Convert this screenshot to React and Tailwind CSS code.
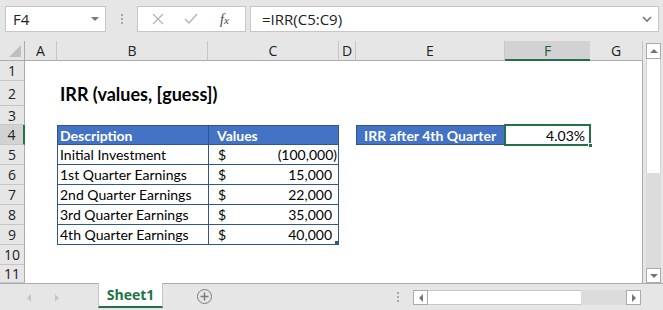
const cols = "grid grid-cols-[25px_32px_151px_131px_17px_149px_85px_53px] grid-rows-[100%]";
const cellFont = "font-['Lato',sans-serif] text-[14px] text-black whitespace-nowrap";
const headFont = "font-['Lato',sans-serif] font-bold text-[14px] text-white whitespace-nowrap";

const rows = [
  { n: 1, h: "h-[20px]" },
  { n: 2, h: "h-[25px]", kind: "title" },
  { n: 3, h: "h-[19px]" },
  { n: 4, h: "h-[20px]", kind: "head" },
  { n: 5, h: "h-[20px]", desc: "Initial Investment", val: "(100,000)", neg: true },
  { n: 6, h: "h-[20px]", desc: "1st Quarter Earnings", val: "15,000" },
  { n: 7, h: "h-[20px]", desc: "2nd Quarter Earnings", val: "22,000" },
  { n: 8, h: "h-[20px]", desc: "3rd Quarter Earnings", val: "35,000" },
  { n: 9, h: "h-[20px]", desc: "4th Quarter Earnings", val: "40,000", last: true },
  { n: 10, h: "h-[20px]" },
  { n: 11, h: "h-[18px]" },
];

function FormulaBar() {
  return (
    <div className="h-[41px] flex items-start pt-[6px] text-[15px] text-[#222]">
      <div className="ml-[5px] w-[101px] h-[26px] bg-white border border-[#c6c6c6] flex items-center justify-between pl-[7px] pr-[6px]">
        <span>F4</span>
        <span className="w-0 h-0 border-l-[4px] border-r-[4px] border-t-[4px] border-l-transparent border-r-transparent border-t-[#777]" />
      </div>
      <div className="w-[31px] h-[26px] flex flex-col items-center justify-center gap-[2px]">
        <span className="w-[2px] h-[2px] bg-[#a6a6a6]" />
        <span className="w-[2px] h-[2px] bg-[#a6a6a6]" />
        <span className="w-[2px] h-[2px] bg-[#a6a6a6]" />
      </div>
      <div className="w-[109px] h-[26px] bg-white border border-[#c6c6c6] flex items-center">
        <svg width="12" height="12" viewBox="0 0 12 12" className="ml-[14px]">
          <path d="M1 1 L11 11 M11 1 L1 11" stroke="#b5b5b5" strokeWidth="1.3" />
        </svg>
        <svg width="14" height="12" viewBox="0 0 14 12" className="ml-[20px]">
          <path d="M1 6 L5 10 L13 1" stroke="#b5b5b5" strokeWidth="1.4" fill="none" />
        </svg>
        <span className="ml-[22px] font-['Liberation_Serif',serif] italic text-[14px] text-[#444]">
          f<span className="text-[11px]">x</span>
        </span>
      </div>
      <div className="ml-[4px] w-[409px] h-[26px] bg-white border border-[#c6c6c6] flex items-center justify-between pl-[11px] pr-[6px]">
        <span>=IRR(C5:C9)</span>
        <svg width="10" height="7" viewBox="0 0 10 7">
          <path d="M1 1 L5 5 L9 1" stroke="#777" strokeWidth="1.6" fill="none" />
        </svg>
      </div>
    </div>
  );
}

function HeaderRow() {
  const letters = ["A", "B", "C", "D", "E", "F", "G"];
  return (
    <div className={`${cols} h-[20px] text-[14px] text-[#222]`}>
      <div className="relative border-r border-b border-[#ababab] bg-[#e6e6e6]">
        <svg width="12" height="12" viewBox="0 0 12 12" className="absolute right-[3px] bottom-[3px]">
          <path d="M12 0 L12 12 L0 12 Z" fill="#bfbfbf" />
        </svg>
      </div>
      {letters.map((l) =>
        l === "F" ? (
          <div key={l} className="flex items-center justify-center bg-[#d2d2d2] border-b-2 border-[#217346] text-[#1e5e38]">
            {l}
          </div>
        ) : (
          <div key={l} className="flex items-center justify-center bg-[#e6e6e6] border-b border-r border-[#ababab] border-r-[#c6c6c6]">
            {l}
          </div>
        )
      )}
    </div>
  );
}

function Row({ r }) {
  const sel = r.n === 4;
  const tb = "border-[#2f5597]";
  let b = null;
  let c = null;
  let e = null;
  let f = null;

  if (r.kind === "title") {
    b = (
      <div className="relative z-10 flex items-end pl-[3px] whitespace-nowrap font-['Lato',sans-serif] font-bold text-[18px] leading-[24px] text-black">
        IRR (values, [guess])
      </div>
    );
  } else if (r.kind === "head") {
    b = (
      <div className={`flex items-center pl-[2px] bg-[#4472c4] border-l border-t border-b ${tb} ${headFont}`}>
        Description
      </div>
    );
    c = (
      <div className={`flex items-center pl-[8px] bg-[#4472c4] border-l border-r border-t border-b ${tb} ${headFont}`}>
        Values
      </div>
    );
    e = (
      <div className={`flex items-center pl-[7px] bg-[#4472c4] border ${tb} ${headFont}`}>
        IRR after 4th Quarter
      </div>
    );
    f = (
      <div className={`relative flex items-center justify-end pr-[5px] ${cellFont}`}>
        4.03%
        <div className="absolute -left-[1px] -top-[1px] -right-[1px] -bottom-[1px] border-2 border-[#217346]" />
        <div className="absolute -right-[3px] -bottom-[3px] w-[5px] h-[5px] bg-[#217346] border border-white" />
      </div>
    );
  } else if (r.desc) {
    b = (
      <div className={`flex items-center pl-[2px] border-l border-b ${tb} ${cellFont}`}>{r.desc}</div>
    );
    c = (
      <div className={`relative flex items-center justify-between pl-[9px] ${r.neg ? "pr-[1px]" : "pr-[6px]"} border-l border-r border-b ${tb} ${cellFont}`}>
        <span>$</span>
        <span>{r.val}</span>
        {r.last && <span className="absolute right-0 bottom-0 w-[3px] h-[3px] bg-[#2f5597]" />}
      </div>
    );
  }

  return (
    <div className={`${cols} ${r.h} bg-white`}>
      <div
        className={`flex items-center justify-center text-[14px] text-[#222] border-b border-[#c6c6c6] ${
          sel ? "bg-[#d2d2d2] border-r-2 border-r-[#217346]" : "bg-[#e6e6e6] border-r border-r-[#ababab]"
        }`}
      >
        {r.n}
      </div>
      <div />
      {b || <div />}
      {c || <div />}
      <div />
      {e || <div />}
      {f || <div />}
      <div className="border-r border-[#ababab]" />
    </div>
  );
}

function VScroll() {
  return (
    <div className="w-[20px] flex flex-col pt-[2px] pl-[3px] pr-[2px]">
      <div className="h-[16px] bg-white border border-[#ababab] flex items-center justify-center">
        <span className="w-0 h-0 border-l-[4px] border-r-[4px] border-b-[4px] border-l-transparent border-r-transparent border-b-[#777]" />
      </div>
      <div className="h-[114px] bg-white border-x border-[#d0d0d0]" />
      <div className="h-[95px] bg-[#dcdcdc]" />
      <div className="h-[15px] bg-white border border-[#ababab] flex items-center justify-center">
        <span className="w-0 h-0 border-l-[4px] border-r-[4px] border-t-[4px] border-l-transparent border-r-transparent border-t-[#777]" />
      </div>
    </div>
  );
}

function TabBar() {
  return (
    <div className="h-[27px] flex items-start border-t border-[#ababab]">
      <span className="mt-[10px] ml-[27px] w-0 h-0 border-t-[4px] border-b-[4px] border-r-[4px] border-t-transparent border-b-transparent border-r-[#c6c6c6]" />
      <span className="mt-[10px] ml-[24px] w-0 h-0 border-t-[4px] border-b-[4px] border-l-[4px] border-t-transparent border-b-transparent border-l-[#c6c6c6]" />
      <div className="ml-[39px] w-[65px] h-[25px] bg-white border-x border-[#c6c6c6] border-b-2 border-b-[#217346] flex items-center justify-center font-['Open_Sans',sans-serif] font-bold text-[14px] text-[#217346] -mt-[1px]">
        Sheet1
      </div>
      <div className="ml-[34px] mt-[5px] w-[15px] h-[15px] rounded-full border border-[#7a7a7a] flex items-center justify-center">
        <svg width="9" height="9" viewBox="0 0 9 9">
          <path d="M4.5 0.5 V8.5 M0.5 4.5 H8.5" stroke="#7a7a7a" strokeWidth="1.5" />
        </svg>
      </div>
      <div className="ml-[185px] mt-[8px] flex flex-col gap-[2px]">
        <span className="w-[2px] h-[2px] bg-[#a6a6a6]" />
        <span className="w-[2px] h-[2px] bg-[#a6a6a6]" />
        <span className="w-[2px] h-[2px] bg-[#a6a6a6]" />
      </div>
      <div className="ml-[14px] mt-[6px] flex h-[15px] w-[228px]">
        <div className="w-[15px] h-[15px] bg-white border border-[#ababab] flex items-center justify-center">
          <span className="w-0 h-0 border-t-[4px] border-b-[4px] border-r-[4px] border-t-transparent border-b-transparent border-r-[#777]" />
        </div>
        <div className="w-[153px] h-[15px] bg-white border-y border-[#c6c6c6]" />
        <div className="w-[45px] h-[15px] bg-[#dcdcdc]" />
        <div className="w-[15px] h-[15px] bg-white border border-[#ababab] flex items-center justify-center">
          <span className="w-0 h-0 border-t-[4px] border-b-[4px] border-l-[4px] border-t-transparent border-b-transparent border-l-[#777]" />
        </div>
      </div>
    </div>
  );
}

export default function App() {
  return (
    <div className="w-[663px] h-[310px] bg-[#e6e6e6] overflow-hidden flex flex-col font-['Open_Sans',sans-serif]">
      <FormulaBar />
      <div className="flex h-[242px]">
        <div className="w-[643px] flex flex-col">
          <HeaderRow />
          {rows.map((r) => (
            <Row key={r.n} r={r} />
          ))}
        </div>
        <VScroll />
      </div>
      <TabBar />
    </div>
  );
}
